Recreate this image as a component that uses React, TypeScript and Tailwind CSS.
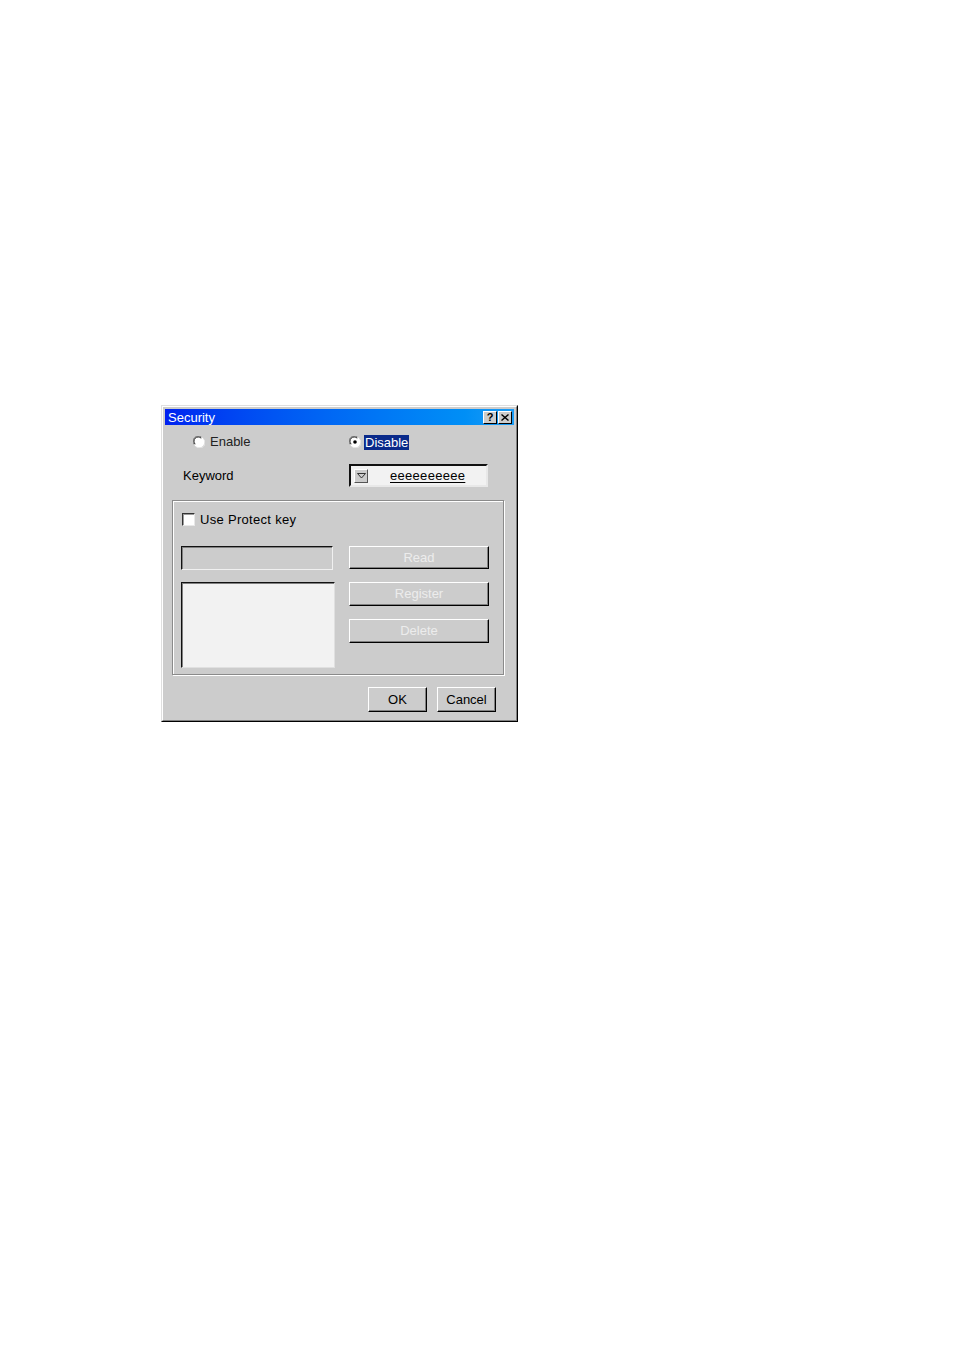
import React from "react";

const font = { fontFamily: '"Liberation Sans", Arial, sans-serif' };

const Radio: React.FC<{ checked?: boolean }> = ({ checked }) => (
  <svg width="12" height="12" viewBox="0 0 12 12" className="shrink-0">
    <circle cx="6" cy="6" r="5.5" fill="#fff" />
    <path d="M1.2 8.5 A5.2 5.2 0 0 1 8.5 1.2" fill="none" stroke="#808080" strokeWidth="1" />
    <path d="M2.2 8.2 A4.2 4.2 0 0 1 8.2 2.2" fill="none" stroke="#222" strokeWidth="1" />
    <path d="M3.5 10.8 A5.2 5.2 0 0 0 10.8 3.5" fill="none" stroke="#e8e8e8" strokeWidth="1" />
    {checked && <circle cx="6" cy="6" r="1.8" fill="#000" />}
  </svg>
);

const RaisedButton: React.FC<{
  label: string;
  disabled?: boolean;
  className?: string;
}> = ({ label, disabled, className }) => (
  <div
    className={`flex items-center justify-center border border-t-white border-l-white border-r-black border-b-black bg-[#cccccc] shadow-[inset_-1px_-1px_0_#808080] text-[13px] ${
      disabled ? "text-[#ececec]" : "text-black"
    } ${className ?? ""}`}
  >
    {label}
  </div>
);

const App: React.FC = () => {
  return (
    <div className="min-h-[1351px] w-[954px] bg-white pl-[161px] pt-[405px]" style={font}>
      {/* dialog frame */}
      <div className="h-[317px] w-[357px] border border-t-[#dfdfdf] border-l-[#dfdfdf] border-r-black border-b-black">
        <div className="flex h-full flex-col border border-t-white border-l-white border-r-[#808080] border-b-[#808080] bg-[#cccccc] p-[2px]">
          {/* title bar */}
          <div className="flex h-[16px] items-center bg-linear-to-r from-[#0020f0] to-[#1a9cf6] pl-[3px] pr-[2px]">
            <span className="flex-1 text-[13px] leading-none text-white">Security</span>
            <div className="flex h-[13px] w-[14px] items-center justify-center border border-t-white border-l-white border-r-black border-b-black bg-[#cccccc] text-[11px] font-bold leading-none text-black">
              ?
            </div>
            <div className="ml-[1px] flex h-[13px] w-[14px] items-center justify-center border border-t-white border-l-white border-r-black border-b-black bg-[#cccccc]">
              <svg width="8" height="7" viewBox="0 0 8 7">
                <path d="M0.5 0.5 L7.5 6.5 M7.5 0.5 L0.5 6.5" stroke="#000" strokeWidth="1.4" />
              </svg>
            </div>
          </div>

          {/* enable / disable */}
          <div className="mt-[5px] flex h-[24px] items-center text-[13px] text-black">
            <div className="ml-[28px] flex w-[156px] items-center gap-[5px]">
              <Radio />
              <span className="text-[#222]">Enable</span>
            </div>
            <div className="flex items-center gap-[3px]">
              <Radio checked />
              <span className="bg-[#0a2a8a] px-[1px] leading-[15px] text-white">Disable</span>
            </div>
          </div>

          {/* keyword */}
          <div className="mt-[10px] flex h-[23px] items-center text-[13px] text-black">
            <span className="ml-[18px] w-[166px]">Keyword</span>
            <div className="flex h-[23px] w-[139px] items-center border-2 border-t-[#111] border-l-[#111] border-r-[#e8e8e8] border-b-[#e8e8e8] bg-[#f2f2f2] pl-[3px]">
              <div className="flex h-[14px] w-[14px] items-center justify-center border border-t-white border-l-white border-r-[#555] border-b-[#555] bg-[#cccccc]">
                <svg width="9" height="6" viewBox="0 0 9 6">
                  <path d="M0.5 0.5 H8.5 L4.5 5 Z" fill="none" stroke="#333" strokeWidth="1" />
                </svg>
              </div>
              <span className="ml-[22px] text-[13px] leading-none tracking-[0.3px] underline underline-offset-2">eeeeeeeeee</span>
            </div>
          </div>

          {/* protect key group */}
          <div className="ml-[7px] mt-[13px] h-[175px] w-[332px] border border-[#8a8a8a] pl-[8px] shadow-[inset_1px_1px_0_#fff,1px_1px_0_#fff]">
            <div className="ml-[1px] mt-[12px] flex h-[13px] items-center gap-[5px] text-[13px] text-black">
              <div className="h-[13px] w-[13px] border border-t-[#333] border-l-[#333] border-r-[#e8e8e8] border-b-[#e8e8e8] bg-white shadow-[inset_1px_1px_0_#9a9a9a]" />
              <span className="tracking-[0.3px]">Use Protect key</span>
            </div>

            <div className="mt-[20px] flex items-start">
              <div className="flex w-[154px] flex-col">
                <div className="h-[24px] w-[152px] border border-t-[#111] border-l-[#111] border-r-[#f0f0f0] border-b-[#f0f0f0] bg-[#cccccc] shadow-[inset_1px_1px_0_#808080]" />
                <div className="mt-[12px] h-[86px] w-[154px] border border-t-[#111] border-l-[#111] border-r-[#e0e0e0] border-b-[#e0e0e0] bg-[#f2f2f2] shadow-[inset_1px_1px_0_#808080]" />
              </div>
              <div className="ml-[14px] flex flex-col">
                <RaisedButton label="Read" disabled className="h-[23px] w-[140px]" />
                <RaisedButton label="Register" disabled className="mt-[13px] h-[24px] w-[140px]" />
                <RaisedButton label="Delete" disabled className="mt-[13px] h-[24px] w-[140px]" />
              </div>
            </div>
          </div>

          {/* OK / Cancel */}
          <div className="ml-[203px] mt-[12px] flex gap-[10px]">
            <RaisedButton label="OK" className="h-[25px] w-[59px]" />
            <RaisedButton label="Cancel" className="h-[25px] w-[59px]" />
          </div>
        </div>
      </div>
    </div>
  );
};

export default App;
